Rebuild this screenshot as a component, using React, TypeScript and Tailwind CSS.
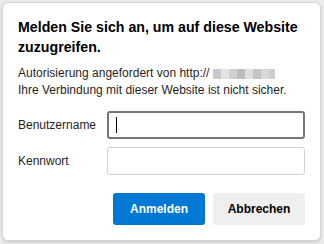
export default function App() {
  return (
    <div className="w-[324px] h-[244px] bg-[#ececec] p-[2px] pr-[3px] pb-[3px]" style={{ fontFamily: '"Liberation Sans", Arial, sans-serif' }}>
      <div className="h-full w-full bg-white rounded-[6px] border border-[#d6d6d6] shadow-[0_1px_3px_rgba(0,0,0,0.18)] pl-[15px] pr-[15px] pt-[14px]">
        <h1 className="text-[14.2px] leading-[20px] font-bold text-black whitespace-nowrap">
          Melden Sie sich an, um auf diese Website
          <br />
          zuzugreifen.
        </h1>
        <div className="mt-[8px] text-[12px] leading-[17px] text-[#1f1f1f] whitespace-nowrap">
          <div className="flex items-center">
            <span>Autorisierung angefordert von http://</span>
            <span className="flex ml-[4px]">
              <span className="w-[8px] h-[10px] bg-[#c9c9c9]" />
              <span className="w-[8px] h-[10px] bg-[#e4e4e4]" />
              <span className="w-[8px] h-[10px] bg-[#d0d0d0]" />
              <span className="w-[8px] h-[10px] bg-[#bdbdbd]" />
              <span className="w-[8px] h-[10px] bg-[#e0e0e0]" />
              <span className="w-[8px] h-[10px] bg-[#c4c4c4]" />
              <span className="w-[8px] h-[10px] bg-[#d8d8d8]" />
              <span className="w-[6px] h-[10px] bg-[#cdcdcd]" />
            </span>
          </div>
          <div>Ihre Verbindung mit dieser Website ist nicht sicher.</div>
        </div>
        <div className="mt-[12px] grid grid-cols-[89px_1fr] gap-y-[8px] items-center text-[12px] text-[#1f1f1f]">
          <label>Benutzername</label>
          <div className="h-[28px] rounded-[3px] border-2 border-[#767676] flex items-center pl-[7px]">
            <span className="w-[1px] h-[16px] bg-black" />
          </div>
          <label>Kennwort</label>
          <div className="h-[28px] rounded-[3px] border border-[#d1d1d1]" />
        </div>
        <div className="mt-[18px] flex justify-end gap-[8px]">
          <button className="w-[92px] h-[32px] rounded-[3px] bg-[#0078d4] text-white text-[12px] font-bold">
            Anmelden
          </button>
          <button className="w-[92px] h-[32px] rounded-[3px] bg-[#efefef] text-black text-[12px] font-bold">
            Abbrechen
          </button>
        </div>
      </div>
    </div>
  )
}
